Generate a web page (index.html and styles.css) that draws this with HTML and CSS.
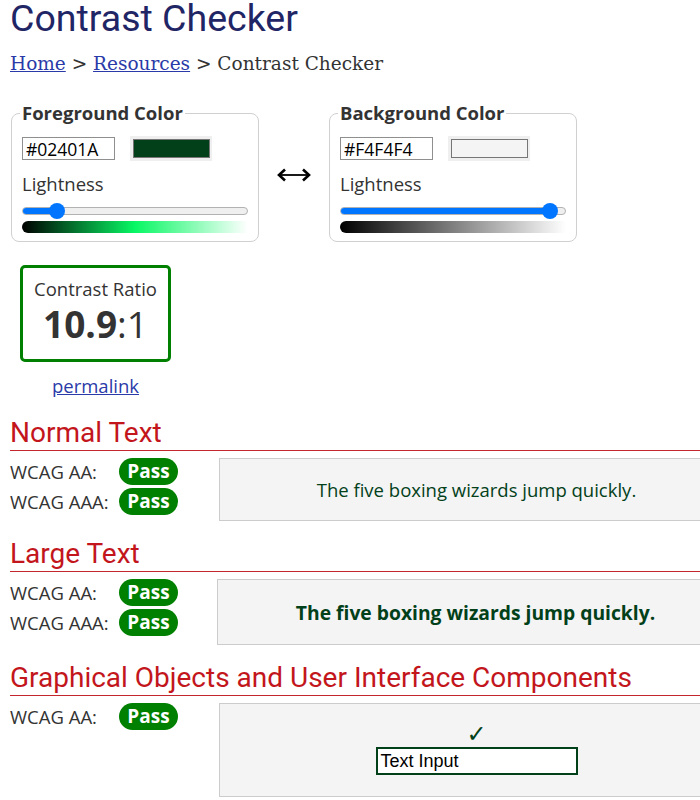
FILE: index.html
```html
<!DOCTYPE html>
<html lang="en">
<head>
<meta charset="utf-8">
<title>Contrast Checker</title>
<link rel="stylesheet" href="styles.css">
</head>
<body>
<div class="page">
  <h1 class="title">Contrast Checker</h1>
  <nav class="crumbs"><a href="#">Home</a> &gt; <a href="#">Resources</a> &gt; Contrast Checker</nav>

  <div class="pickers">
    <fieldset class="picker">
      <legend>Foreground Color</legend>
      <div class="inputs">
        <input class="hex" type="text" value="#02401A" readonly>
        <span class="swatch"><span class="swatch-fill fg-fill"></span></span>
      </div>
      <div class="lbl">Lightness</div>
      <div class="slider">
        <div class="track"><div class="fill" style="width:35px"></div></div>
        <div class="thumb" style="left:27px"></div>
      </div>
      <div class="grad fg-grad"></div>
    </fieldset>

    <svg class="swap" width="34" height="14" viewBox="0 0 34 14" aria-hidden="true">
      <path d="M2 7 H32" stroke="#000" stroke-width="1.8" fill="none"/>
      <path d="M8 1.5 L2 7 L8 12.5" stroke="#000" stroke-width="2.6" fill="none" stroke-linejoin="miter"/>
      <path d="M26 1.5 L32 7 L26 12.5" stroke="#000" stroke-width="2.6" fill="none" stroke-linejoin="miter"/>
    </svg>

    <fieldset class="picker">
      <legend>Background Color</legend>
      <div class="inputs">
        <input class="hex" type="text" value="#F4F4F4" readonly>
        <span class="swatch"><span class="swatch-fill bg-fill"></span></span>
      </div>
      <div class="lbl">Lightness</div>
      <div class="slider">
        <div class="track"><div class="fill" style="width:210px"></div></div>
        <div class="thumb" style="left:202px"></div>
      </div>
      <div class="grad bg-grad"></div>
    </fieldset>
  </div>

  <div class="ratio-wrap">
    <div class="ratio">
      <div class="ratio-label">Contrast Ratio</div>
      <div class="ratio-value"><b>10.9</b>:1</div>
    </div>
    <a class="permalink" href="#">permalink</a>
  </div>

  <section class="result">
    <h2 class="result-title">Normal Text</h2>
    <div class="result-body">
      <div class="levels">
        <div class="level"><span class="level-name">WCAG AA:</span><span class="pass">Pass</span></div>
        <div class="level"><span class="level-name">WCAG AAA:</span><span class="pass">Pass</span></div>
      </div>
      <div class="sample sample-normal">The five boxing wizards jump quickly.</div>
    </div>
  </section>

  <section class="result">
    <h2 class="result-title">Large Text</h2>
    <div class="result-body">
      <div class="levels levels-large">
        <div class="level"><span class="level-name">WCAG AA:</span><span class="pass">Pass</span></div>
        <div class="level"><span class="level-name">WCAG AAA:</span><span class="pass">Pass</span></div>
      </div>
      <div class="sample sample-large">The five boxing wizards jump quickly.</div>
    </div>
  </section>

  <section class="result">
    <h2 class="result-title">Graphical Objects and User Interface Components</h2>
    <div class="result-body">
      <div class="levels">
        <div class="level"><span class="level-name">WCAG AA:</span><span class="pass">Pass</span></div>
      </div>
      <div class="sample sample-ui">
        <span class="check">&#10003;</span>
        <span class="ui-input">Text Input</span>
      </div>
    </div>
  </section>
</div>
</body>
</html>
```

FILE: styles.css
```css
html, body {
  margin: 0;
  padding: 0;
  overflow: hidden;
  background: #fff;
}
body {
  font-family: "Open Sans", "DejaVu Sans", sans-serif;
  font-size: 18.5px;
  color: #333;
}
.page {
  width: 724px;
  padding-left: 10px;
}
.title {
  margin: 0;
  font-family: Roboto, "Liberation Sans", sans-serif;
  font-weight: 400;
  font-size: 37.5px;
  line-height: 36px;
  color: #1f2565;
}
.crumbs {
  margin-top: 15px;
  font-family: "DejaVu Serif", "Liberation Serif", serif;
  font-size: 18.5px;
  line-height: 26px;
  color: #333;
}
.crumbs a {
  color: #2a3aa8;
}
.pickers {
  display: flex;
  align-items: center;
  gap: 18px;
  margin-top: 24px;
  margin-left: 1px;
}
.picker {
  margin: 0;
  width: 248px;
  box-sizing: border-box;
  border: 1px solid #d0d0d0;
  border-radius: 8px;
  padding: 0 10px 8px 10px;
  min-width: 0;
}
.picker legend {
  font-weight: 700;
  font-size: 18.5px;
  line-height: 24px;
  padding: 0 2px;
  margin-left: -2px;
  color: #333;
}
.inputs {
  display: flex;
  align-items: center;
  gap: 15px;
  margin-top: 11px;
}
.hex {
  width: 93px;
  height: 23px;
  box-sizing: border-box;
  margin: 0;
  border: 1px solid #8f8f8f;
  padding: 0 3px;
  font-family: "Open Sans", sans-serif;
  font-size: 17.5px;
  color: #000;
  outline: none;
}
.swatch {
  display: flex;
  width: 82px;
  height: 25px;
  box-sizing: border-box;
  padding: 3px 2px 3px 3px;
  background: #efefef;
}
.swatch-fill {
  flex: 1;
  border: 1px solid #767676;
}
.fg-fill { background: #02401a; }
.bg-fill { background: #f4f4f4; }
.lbl {
  margin-top: 11px;
  font-size: 18.5px;
  line-height: 24px;
  color: #333;
}
.slider {
  position: relative;
  height: 16px;
  margin-top: 7px;
}
.track {
  position: relative;
  top: 4px;
  height: 8px;
  box-sizing: border-box;
  border: 1px solid #b2b2b2;
  border-radius: 4px;
  background: #efefef;
  overflow: hidden;
}
.fill {
  height: 100%;
  margin: -1px;
  padding: 1px 0;
  background: #0075ff;
  border-radius: 4px 0 0 4px;
}
.thumb {
  position: absolute;
  top: 0;
  width: 16px;
  height: 16px;
  border-radius: 50%;
  background: #0075ff;
}
.grad {
  height: 12px;
  margin-top: 2px;
  border-radius: 6px 0 0 6px;
}
.fg-grad {
  background: linear-gradient(to right, #000 0%, hsl(143, 94%, 50%) 50%, #fff 100%);
}
.bg-grad {
  background: linear-gradient(to right, #000 0%, #fff 100%);
}
.swap {
  flex: none;
  margin-top: 6px;
}
.ratio-wrap {
  display: flex;
  flex-direction: column;
  align-items: center;
  width: 151px;
  margin-left: 10px;
  margin-top: 23px;
}
.ratio {
  width: 151px;
  height: 97px;
  box-sizing: border-box;
  border: 3px solid #008000;
  border-radius: 5px;
  text-align: center;
  padding-top: 9px;
}
.ratio-label {
  font-size: 18.5px;
  line-height: 24px;
  color: #333;
}
.ratio-value {
  font-size: 37px;
  line-height: 46px;
  color: #333;
}
.ratio-value b {
  font-weight: 700;
}
.permalink {
  margin-top: 12px;
  font-size: 18.5px;
  line-height: 24px;
  color: #2a3aa8;
}
.result {
  margin-top: 18px;
}
.result + .result {
  margin-top: 16px;
}
.result-title {
  margin: 0;
  font-family: Roboto, "Liberation Sans", sans-serif;
  font-weight: 400;
  font-size: 28px;
  line-height: 34px;
  color: #c3161c;
  border-bottom: 1px solid #c3262c;
  padding-bottom: 0;
}
.result-body {
  display: flex;
  align-items: flex-start;
  margin-top: 7px;
}
.levels {
  width: 209px;
  flex: none;
  display: flex;
  flex-direction: column;
  gap: 3px;
}
.levels-large {
  width: 207px;
}
.level {
  display: flex;
  align-items: center;
  height: 27px;
}
.level-name {
  width: 109px;
  flex: none;
  font-size: 18.5px;
  color: #333;
}
.pass {
  display: inline-block;
  width: 59px;
  height: 27px;
  line-height: 27px;
  border-radius: 14px;
  background: #008000;
  color: #fff;
  font-weight: 700;
  font-size: 19px;
  text-align: center;
}
.sample {
  flex: 1;
  box-sizing: border-box;
  border: 1px solid #cccccc;
  background: #f4f4f4;
  color: #02401a;
  display: flex;
  align-items: center;
  justify-content: center;
  text-align: center;
}
.sample-normal {
  height: 63px;
  font-size: 18.5px;
}
.sample-large {
  height: 66px;
  font-size: 19.3px;
  font-weight: 700;
}
.sample-ui {
  height: 94px;
  flex-direction: column;
  justify-content: flex-start;
  padding-top: 18px;
}
.check {
  font-family: "DejaVu Sans", sans-serif;
  font-size: 24px;
  line-height: 24px;
  color: #02401a;
}
.ui-input {
  margin-top: 1px;
  width: 202px;
  height: 28px;
  box-sizing: border-box;
  border: 2px solid #02401a;
  background: #fff;
  font-family: "Liberation Sans", Arial, sans-serif;
  font-size: 18px;
  line-height: 24px;
  color: #000;
  text-align: left;
  padding-left: 3px;
}
```
